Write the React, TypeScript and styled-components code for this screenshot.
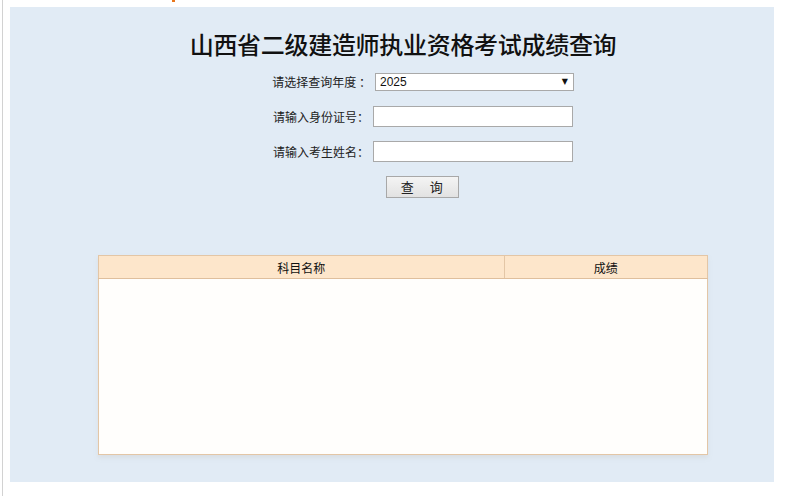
import React from "react";
import styled, { createGlobalStyle } from "styled-components";

const Global = createGlobalStyle`
  html, body { margin: 0; padding: 0; background: #ffffff; }
  body { font-family: "Noto Sans CJK SC", "Liberation Sans", sans-serif; color: #222; }
`;

const Page = styled.div`
  position: relative;
  width: 790px;
  height: 496px;
  box-sizing: border-box;
  padding: 7px 0 0 2px;
  display: flex;
`;

const Rule = styled.div`
  width: 1px;
  height: 496px;
  margin-top: -7px;
  background: #d2d2d2;
  flex: none;
`;

const TopMark = styled.span`
  position: absolute;
  left: 172px;
  top: 0;
  width: 3px;
  height: 2px;
  background: #e8761c;
`;

const Panel = styled.main`
  margin-left: 7px;
  width: 764px;
  height: 475px;
  background: #e1ebf5;
  box-sizing: border-box;
  padding-left: 88px;
  padding-top: 21px;
`;

const Inner = styled.div`
  width: 610px;
  display: flex;
  flex-direction: column;
`;

const Title = styled.h1`
  margin: 0;
  text-align: center;
  font-family: "Noto Sans CJK SC", serif;
  font-weight: 500;
  font-size: 24px;
  line-height: 32px;
  color: #111;
  letter-spacing: -0.3px;
`;

const Form = styled.form`
  margin-top: 11px;
  display: flex;
  flex-direction: column;
  gap: 14px;
`;

const Row = styled.div`
  display: flex;
  align-items: center;
  height: 21px;
`;

const Label = styled.label<{ $w: number }>`
  width: ${(p) => p.$w}px;
  text-align: right;
  font-size: 12px;
  line-height: 16px;
  color: #222;
  white-space: nowrap;
`;

const SelectWrap = styled.div`
  position: relative;
  margin-left: 4px;
  width: 199px;
  height: 18px;
`;

const Select = styled.select`
  display: block;
  appearance: none;
  -webkit-appearance: none;
  width: 199px;
  height: 18px;
  box-sizing: border-box;
  border: 1px solid #a9a9a9;
  border-radius: 0;
  background: #fff;
  font-family: "Liberation Sans", Arial, sans-serif;
  font-size: 12px;
  line-height: 16px;
  color: #111;
  padding: 0 0 0 4px;
  margin: 0;
  outline: none;
`;

const Arrow = styled.span`
  position: absolute;
  right: 6px;
  top: 3px;
  font-family: "DejaVu Sans", sans-serif;
  font-size: 8px;
  line-height: 12px;
  color: #111;
  pointer-events: none;
`;

const Input = styled.input`
  display: block;
  margin: 0 0 0 4px;
  width: 200px;
  height: 21px;
  box-sizing: border-box;
  border: 1px solid #a9a9a9;
  background: #fff;
  padding: 0 4px;
  font-size: 12px;
  outline: none;
`;

const ButtonRow = styled.div`
  display: flex;
  padding-left: 288px;
`;

const Button = styled.button`
  width: 73px;
  height: 22px;
  box-sizing: border-box;
  border: 1px solid #a8a8a8;
  background: linear-gradient(#f4f4f4, #e2e2e2);
  font-family: "Noto Sans CJK SC", sans-serif;
  font-size: 13px;
  color: #222;
  padding: 0;
  white-space: pre;
  line-height: 20px;
  letter-spacing: 1.5px;
`;

const Table = styled.table`
  margin-top: 57px;
  width: 610px;
  border-collapse: collapse;
  background: #fffefc;
  border: 1px solid #e3c6a6;
  box-shadow: 0 3px 4px rgba(200, 190, 185, 0.25);
`;

const Th = styled.th<{ $w: number }>`
  width: ${(p) => p.$w}px;
  height: 22px;
  background: #fde6cb;
  border: 1px solid #e3c6a6;
  border-bottom-color: #dfbf9d;
  font-weight: normal;
  font-size: 12px;
  color: #111;
  padding: 0;
  text-align: center;
`;

const Td = styled.td`
  height: 175px;
  padding: 0;
  background: #fffefc;
`;

export default function App() {
  return (
    <Page>
      <Global />
      <Rule />
      <TopMark />
      <Panel>
        <Inner>
          <Title>山西省二级建造师执业资格考试成绩查询</Title>
          <Form onSubmit={(e) => e.preventDefault()}>
            <Row>
              <Label $w={273}>请选择查询年度 ：</Label>
              <SelectWrap>
                <Select defaultValue="2025">
                  <option value="2025">2025</option>
                </Select>
                <Arrow>▼</Arrow>
              </SelectWrap>
            </Row>
            <Row>
              <Label $w={271}>请输入身份证号：</Label>
              <Input type="text" />
            </Row>
            <Row>
              <Label $w={271}>请输入考生姓名：</Label>
              <Input type="text" />
            </Row>
            <ButtonRow>
              <Button type="button">{"查\u3000询"}</Button>
            </ButtonRow>
          </Form>
          <Table>
            <thead>
              <tr>
                <Th $w={406}>科目名称</Th>
                <Th $w={203}>成绩</Th>
              </tr>
            </thead>
            <tbody>
              <tr>
                <Td colSpan={2} />
              </tr>
            </tbody>
          </Table>
        </Inner>
      </Panel>
    </Page>
  );
}
